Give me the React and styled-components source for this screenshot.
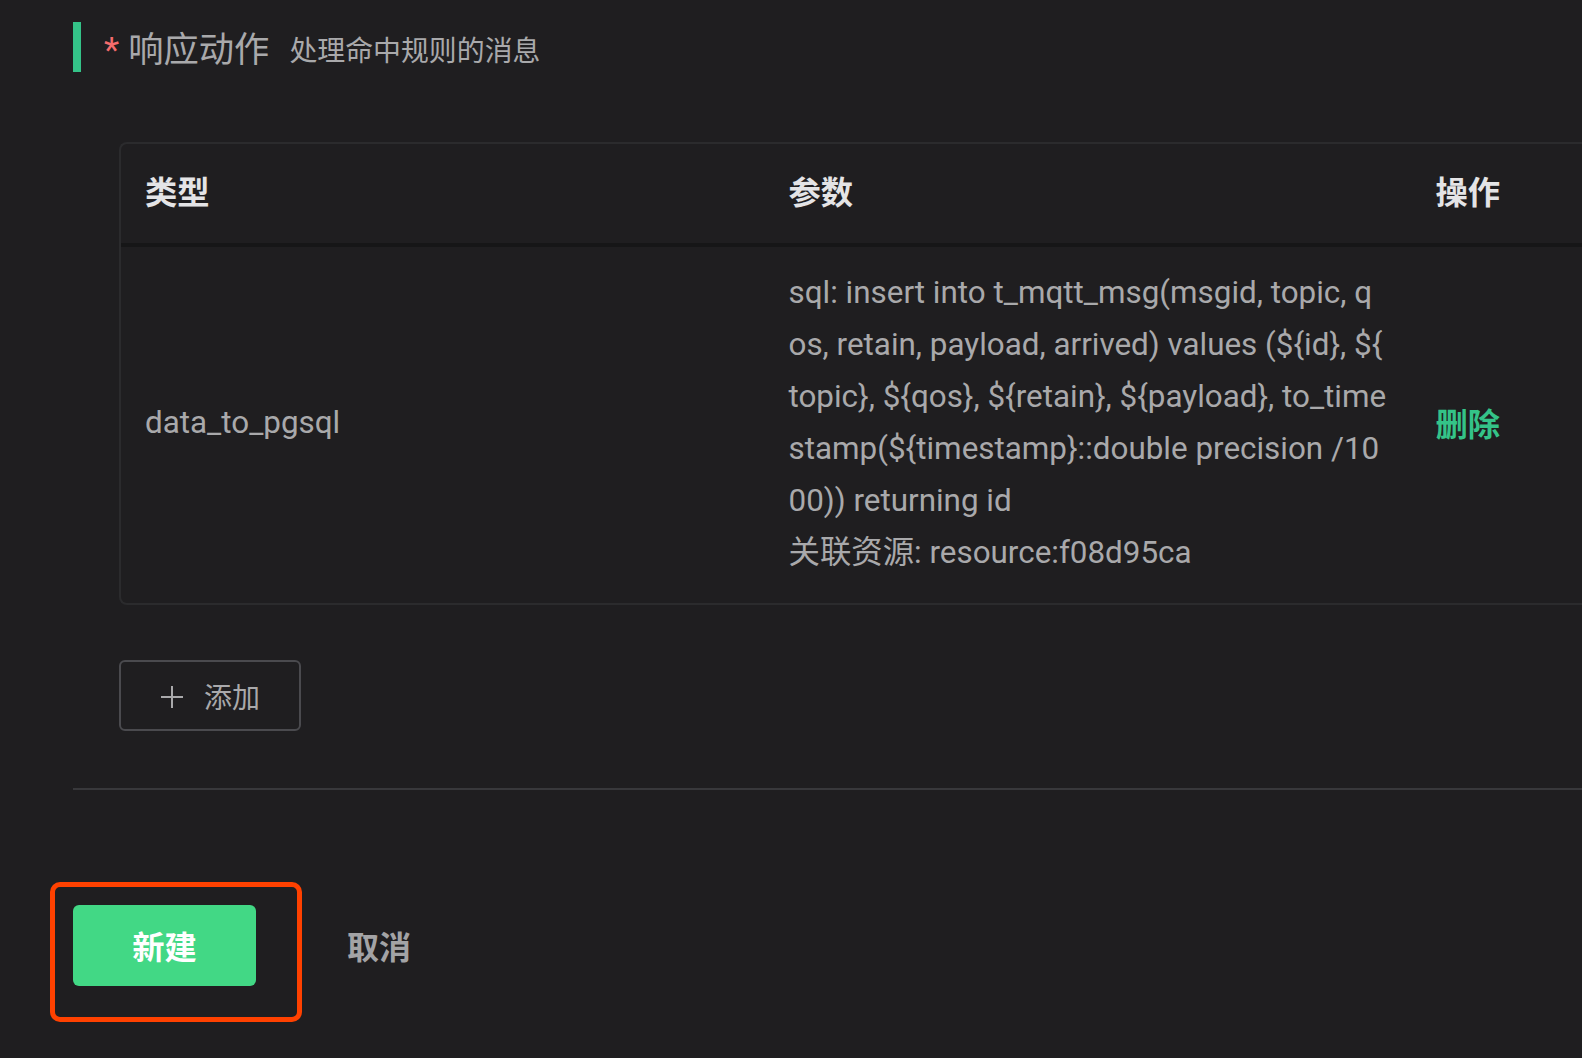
import React from 'react';
import styled, { createGlobalStyle } from 'styled-components';

const GlobalStyle = createGlobalStyle`
  html, body {
    margin: 0;
    padding: 0;
    background: #1f1e20;
    overflow: hidden;
  }
  body {
    font-family: Roboto, "Noto Sans CJK SC", sans-serif;
  }
`;

const Page = styled.div`
  width: 100%;
  height: 1067px;
  overflow: hidden;
  padding: 22px 0 0 73px;
  box-sizing: border-box;
  background: #1f1e20;
`;

const SectionTitle = styled.div`
  display: flex;
  align-items: center;
  height: 49.5px;
  border-left: 8px solid #34c388;
  padding-left: 23px;
  gap: 20px;
`;

const Label = styled.span`
  font-size: 35.3px;
  color: #a9a9ab;
  font-family: "Noto Sans CJK SC", sans-serif;
  &::before {
    content: '*';
    color: #f56c6c;
    margin-right: 9px;
    font-family: Roboto, sans-serif;
  }
`;

const Hint = styled.span`
  font-size: 27.9px;
  color: #a9a9ab;
  font-family: "Noto Sans CJK SC", sans-serif;
  padding-top: 4px;
`;

const Table = styled.div`
  margin: 70.7px 0 0 46px;
  border: 2px solid #2b2b2d;
  border-right: none;
  border-radius: 8px 0 0 8px;
  display: grid;
  grid-template-columns: 643.5px 647px 1fr;
`;

const HeadCell = styled.div`
  height: 102.8px;
  display: flex;
  align-items: center;
  padding-left: 24px;
  padding-bottom: 8px;
  box-sizing: border-box;
  font-size: 32.3px;
  font-weight: 700;
  color: #e4e4e6;
  font-family: "Noto Sans CJK SC", sans-serif;
  border-bottom: 4px solid #161617;
`;

const Cell = styled.div`
  display: flex;
  align-items: center;
  padding: 20.2px 24px 24.2px;
  font-size: 31.4px;
  line-height: 51.94px;
  color: #a9a9ab;
  word-break: break-all;
  line-break: anywhere;
  min-width: 0;
`;

const Params = styled.div`
  width: 100%;
`;

const DeleteLink = styled.span`
  color: #34c388;
  font-weight: 700;
  font-size: 32.3px;
  font-family: "Noto Sans CJK SC", sans-serif;
  cursor: pointer;
`;

const AddButton = styled.button`
  margin: 55.4px 0 0 46px;
  width: 182px;
  height: 71px;
  background: transparent;
  border: 2px solid #4a4a4e;
  border-radius: 6px;
  display: flex;
  align-items: center;
  justify-content: center;
  gap: 20px;
  color: #a9a9ab;
  font-size: 28px;
  font-family: "Noto Sans CJK SC", sans-serif;
  cursor: pointer;
  svg {
    margin-top: 2px;
  }
`;

const Divider = styled.div`
  margin-top: 56.4px;
  height: 2px;
  background: #38383b;
`;

const Footer = styled.div`
  margin-top: 115px;
  display: flex;
  align-items: center;
  gap: 91px;
`;

const Highlight = styled.div`
  position: relative;
  &::after {
    content: '';
    position: absolute;
    left: -22.6px;
    top: -23.2px;
    width: 252px;
    height: 140px;
    border: 5px solid #ff4100;
    border-radius: 10px;
    box-sizing: border-box;
    pointer-events: none;
  }
`;

const PrimaryButton = styled.button`
  display: block;
  width: 183px;
  height: 81px;
  background: #42d885;
  border: none;
  border-radius: 6px;
  color: #ffffff;
  font-size: 32.3px;
  font-weight: 700;
  font-family: "Noto Sans CJK SC", sans-serif;
  cursor: pointer;
`;

const TextButton = styled.button`
  background: transparent;
  border: none;
  padding: 0;
  color: #a3a3a5;
  font-size: 32px;
  font-weight: 700;
  font-family: "Noto Sans CJK SC", sans-serif;
  cursor: pointer;
`;

const actions = [
  {
    type: 'data_to_pgsql',
    sql: 'insert into t_mqtt_msg(msgid, topic, qos, retain, payload, arrived) values (${id}, ${topic}, ${qos}, ${retain}, ${payload}, to_timestamp(${timestamp}::double precision /1000)) returning id',
    resource: 'resource:f08d95ca',
  },
];

export default function App() {
  return (
    <Page>
      <GlobalStyle />
      <SectionTitle>
        <Label>响应动作</Label>
        <Hint>处理命中规则的消息</Hint>
      </SectionTitle>

      <Table>
        <HeadCell>类型</HeadCell>
        <HeadCell>参数</HeadCell>
        <HeadCell>操作</HeadCell>
        {actions.map((a) => (
          <React.Fragment key={a.type}>
            <Cell>{a.type}</Cell>
            <Cell>
              <Params>
                <div>sql: {a.sql}</div>
                <div>关联资源: {a.resource}</div>
              </Params>
            </Cell>
            <Cell>
              <DeleteLink>删除</DeleteLink>
            </Cell>
          </React.Fragment>
        ))}
      </Table>

      <AddButton>
        <svg width="24" height="24" viewBox="0 0 24 24">
          <path d="M12 1V23M1 12H23" stroke="#a9a9ab" strokeWidth="2" />
        </svg>
        添加
      </AddButton>

      <Divider />

      <Footer>
        <Highlight>
          <PrimaryButton>新建</PrimaryButton>
        </Highlight>
        <TextButton>取消</TextButton>
      </Footer>
    </Page>
  );
}
